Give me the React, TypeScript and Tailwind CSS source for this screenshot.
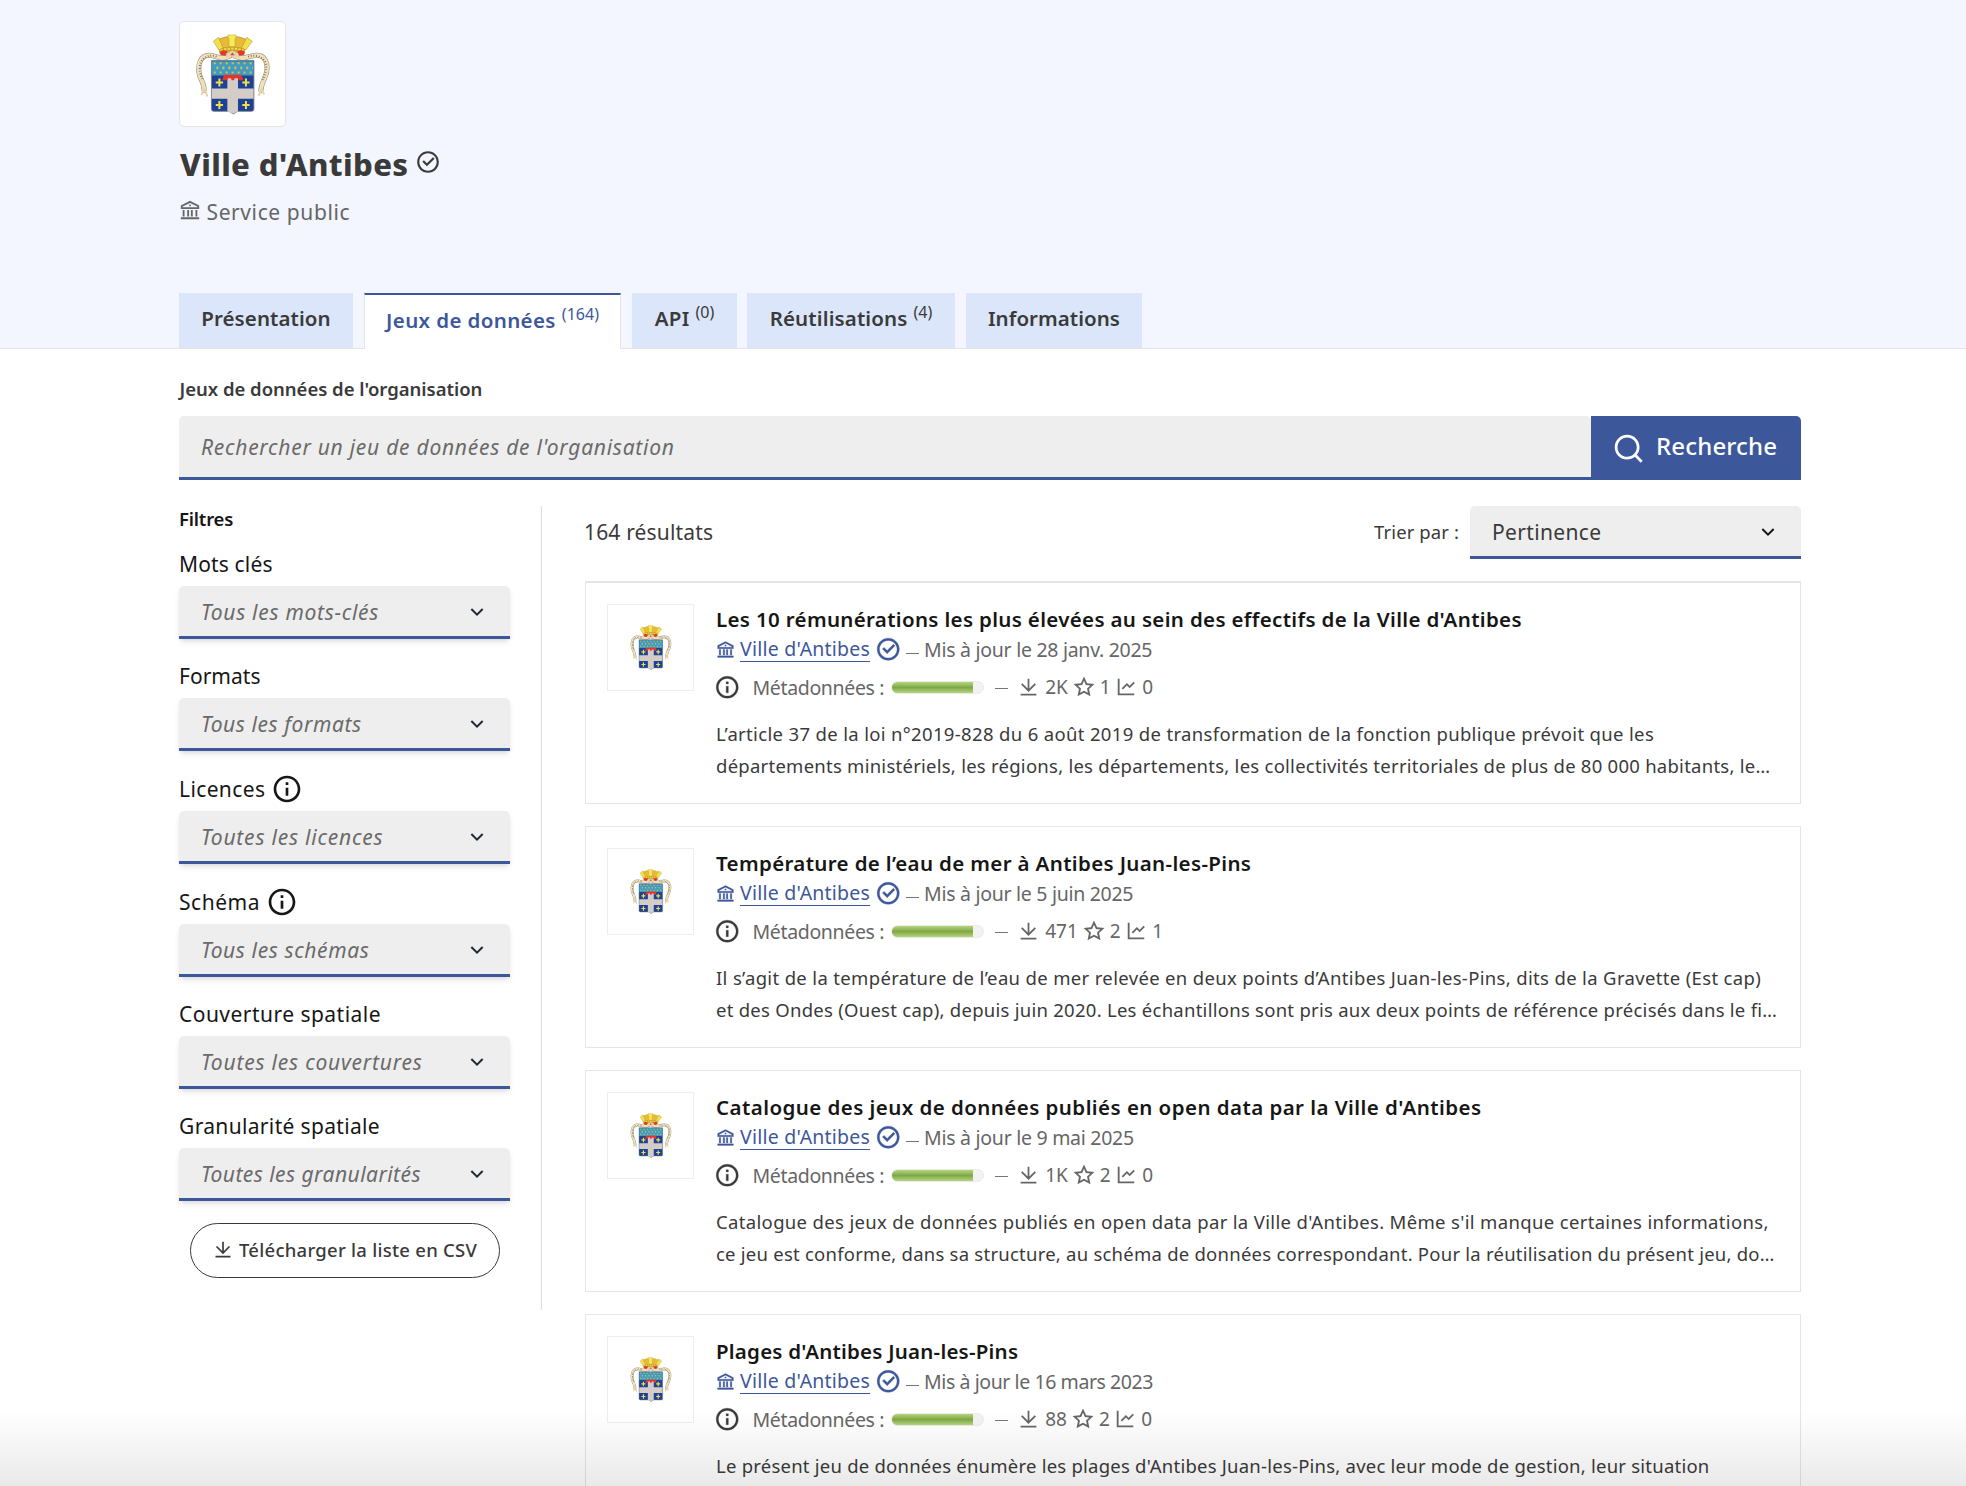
import React from "react";
import {
  RiArrowDownSLine,
  RiBankLine,
  RiCheckboxCircleLine,
  RiDownloadLine,
  RiInformationLine,
  RiLineChartLine,
  RiSearchLine,
  RiStarLine,
} from "react-icons/ri";

const LILIES = [
  [149, 216],
  [229, 216],
  [149, 284],
  [229, 284],
];

function CoatOfArms({ className }: { className: string }) {
  return (
    <svg viewBox="80 70 220 244" className={className} aria-hidden="true">
      <g fill="none" strokeLinecap="round" strokeLinejoin="round">
        <path d="M180 137C150 150 140 134 118 134C92 134 84 160 88 188C90 205 104 218 103 240" stroke="#7f8b91" strokeWidth="15" />
        <path d="M196 137C226 150 238 134 262 134C286 134 295 156 292 180C290 200 276 214 274 240" stroke="#7f8b91" strokeWidth="15" />
        <path d="M180 137C150 150 140 134 118 134C92 134 84 160 88 188C90 205 104 218 103 240" stroke="#f3dfb4" strokeWidth="12" />
        <path d="M196 137C226 150 238 134 262 134C286 134 295 156 292 180C290 200 276 214 274 240" stroke="#f3dfb4" strokeWidth="12" />
        <path d="M102 235L96 251M106 238L112 256M276 235L268 254M276 238L283 250" stroke="#e9d3a6" strokeWidth="6" />
        <path d="M140 138C120 130 92 140 90 170C89 190 94 196 98 206" stroke="#5a5040" strokeWidth="6" strokeDasharray="2 6" strokeLinecap="butt" />
        <path d="M236 138C258 130 288 140 290 166C290 186 284 196 280 208" stroke="#5a5040" strokeWidth="6" strokeDasharray="2 6" strokeLinecap="butt" />
      </g>
      <path d="M146 86Q188 68 230 86L224 128Q187 118 150 128Z" fill="#e9b93b" stroke="#a98a24" strokeWidth="2" />
      <path d="M148 114Q187 102 226 114L220 132Q187 122 154 132Z" fill="#c9a02c" />
      <path d="M152 120Q187 108 222 120" fill="none" stroke="#efe04a" strokeWidth="6" strokeDasharray="7 4" />
      <path d="M131 92L146 80L160 112L147 118Z" fill="#f2e04a" stroke="#a98a24" strokeWidth="1.5" />
      <path d="M248 92L232 80L216 112L229 118Z" fill="#f2e04a" stroke="#a98a24" strokeWidth="1.5" />
      <path d="M175 73H199V84H196V108H178V84H175Z" fill="#f7ea55" stroke="#b79d2c" strokeWidth="1.5" />
      <ellipse cx="162" cy="127" rx="11" ry="8" fill="#e03a26" />
      <ellipse cx="214" cy="127" rx="11" ry="8" fill="#e03a26" />
      <path d="M170 128L188 120L206 128L210 142Q188 132 168 142Z" fill="#e9cfae" />
      <path d="M182 134L188 126L195 134Z" fill="#d8452f" />
      <path d="M125 150H253V296Q253 303 246 303H204L191 311L178 303H132Q125 303 125 296Z" fill="#1d4195" stroke="#777d86" strokeWidth="2.5" />
      <rect x="126" y="152" width="126" height="43" fill="#3f9bc6" />
      <g stroke="#d3c23a" strokeWidth="6" strokeDasharray="6 12">
        <path d="M132 158H250" />
        <path d="M140 172H250" strokeWidth="8" />
        <path d="M132 186H250" />
      </g>
      <path d="M173 195H205V234H252V265H205V303L191 310L173 303V265H126V234H173Z" fill="#d3ccc7" />
      <path d="M163 193H216L221 209H207L205 203H195L193 209H186L184 203H175L172 209H158Z" fill="#e5342a" />
      {LILIES.map(([x, y]) => (
        <path key={`${x}-${y}`} d={`M${x} ${y - 12}V${y + 12}M${x - 11} ${y}H${x + 11}`} stroke="#f2e04a" strokeWidth="6" />
      ))}
    </svg>
  );
}

function Tab({ label, count, width, tracking, active }: { label: string; count?: number; width: string; tracking: string; active?: boolean }) {
  const look = active
    ? "-mb-px h-14 border-x border-t-2 border-x-[#e5e5e5] border-t-[#3d579b] bg-white pt-[11px] text-[#3d579b]"
    : "h-[55px] bg-[#dce6fa] pt-[10.5px] text-[#3a3a3a]";
  return (
    <a className={`block text-center text-[20.5px] leading-7 font-semibold whitespace-nowrap ${width} ${look}`}>
      <span className={tracking}>{label}</span>
      {count !== undefined && (
        <span className="ml-[6px] align-[8px] text-[16px] leading-[0] font-normal">({count})</span>
      )}
    </a>
  );
}

const FILTERS = [
  { label: "Mots clés", value: "Tous les mots-clés", lt: "tracking-[0.15px]", vt: "tracking-[0.71px]" },
  { label: "Formats", value: "Tous les formats", lt: "tracking-[0.03px]", vt: "tracking-[0.59px]" },
  { label: "Licences", value: "Toutes les licences", info: true, lt: "tracking-[0.38px]", vt: "tracking-[0.78px]" },
  { label: "Schéma", value: "Tous les schémas", info: true, lt: "tracking-[0.53px]", vt: "tracking-[0.61px]" },
  { label: "Couverture spatiale", value: "Toutes les couvertures", lt: "tracking-[0.47px]", vt: "tracking-[0.79px]" },
  { label: "Granularité spatiale", value: "Toutes les granularités", lt: "tracking-[0.34px]", vt: "tracking-[0.46px]" },
];

function Filter({ label, value, info, lt, vt }: { label: string; value: string; info?: boolean; lt: string; vt: string }) {
  return (
    <div className="mb-[23px]">
      <div className={`flex items-center text-[21px] text-[#161616] ${info ? "h-[29px]" : "h-7"}`}>
        <span className={`pt-[2px] ${lt}`}>{label}</span>
        {info && <RiInformationLine className="-my-1 ml-[6px] size-8" />}
      </div>
      <div className="mt-2 flex h-[53px] items-center justify-between rounded-t-[5px] border-b-[3px] border-[#3d579b] bg-[#eeeeee] pt-[2px] pr-[21px] pl-[22px] shadow-md">
        <span className={`pt-px text-[21px] text-[#6a6a6a] italic ${vt}`}>{value}</span>
        <RiArrowDownSLine className="size-6 text-[#1f2937]" />
      </div>
    </div>
  );
}

type Dataset = {
  title: string;
  tt: string;
  date: string;
  dt: string;
  downloads: string;
  stars: number;
  reuses: number;
  lines: { text: string; t: string }[];
};

const DATASETS: Dataset[] = [
  {
    title: "Les 10 rémunérations les plus élevées au sein des effectifs de la Ville d'Antibes",
    tt: "tracking-[0.333px]",
    date: "28 janv. 2025",
    dt: "tracking-[-0.28px]",
    downloads: "2K",
    stars: 1,
    reuses: 0,
    lines: [
      { text: "L’article 37 de la loi n°2019-828 du 6 août 2019 de transformation de la fonction publique prévoit que les", t: "tracking-[0.342px]" },
      { text: "départements ministériels, les régions, les départements, les collectivités territoriales de plus de 80 000 habitants, le…", t: "tracking-[0.252px]" },
    ],
  },
  {
    title: "Température de l’eau de mer à Antibes Juan-les-Pins",
    tt: "tracking-[0.352px]",
    date: "5 juin 2025",
    dt: "tracking-[-0.288px]",
    downloads: "471",
    stars: 2,
    reuses: 1,
    lines: [
      { text: "Il s’agit de la température de l’eau de mer relevée en deux points d’Antibes Juan-les-Pins, dits de la Gravette (Est cap)", t: "tracking-[0.342px]" },
      { text: "et des Ondes (Ouest cap), depuis juin 2020. Les échantillons sont pris aux deux points de référence précisés dans le fi…", t: "tracking-[0.264px]" },
    ],
  },
  {
    title: "Catalogue des jeux de données publiés en open data par la Ville d'Antibes",
    tt: "tracking-[0.444px]",
    date: "9 mai 2025",
    dt: "tracking-[-0.276px]",
    downloads: "1K",
    stars: 2,
    reuses: 0,
    lines: [
      { text: "Catalogue des jeux de données publiés en open data par la Ville d'Antibes. Même s'il manque certaines informations,", t: "tracking-[0.34px]" },
      { text: "ce jeu est conforme, dans sa structure, au schéma de données correspondant. Pour la réutilisation du présent jeu, do…", t: "tracking-[0.238px]" },
    ],
  },
  {
    title: "Plages d'Antibes Juan-les-Pins",
    tt: "tracking-[0.223px]",
    date: "16 mars 2023",
    dt: "tracking-[-0.42px]",
    downloads: "88",
    stars: 2,
    reuses: 0,
    lines: [
      { text: "Le présent jeu de données énumère les plages d'Antibes Juan-les-Pins, avec leur mode de gestion, leur situation", t: "tracking-[0.23px]" },
    ],
  },
];

function DatasetCard({ d }: { d: Dataset }) {
  return (
    <article className="flex h-[222px] shrink-0 gap-[22px] border border-[#e5e5e5] pt-[21px] pl-[21px]">
      <div className="flex h-[87px] w-[87px] shrink-0 items-center justify-center border border-[#eeeeee] bg-white">
        <CoatOfArms className="h-[45px] w-[42px]" />
      </div>
      <div className="min-w-0 flex-1 pt-px whitespace-nowrap">
        <h3 className={`text-[20.5px] leading-7 font-semibold text-[#161616] ${d.tt}`}>{d.title}</h3>
        <div className="mt-[3px] flex h-[26px] items-center text-[19.5px] text-[#666666]">
          <RiBankLine className="size-[19px] text-[#3d579b]" strokeWidth={0.3} />
          <a className="mt-px ml-[5px] border-b-[1.5px] border-[#3d579b] leading-[24px] tracking-[0.22px] text-[#3d579b]">Ville d'Antibes</a>
          <RiCheckboxCircleLine className="ml-[5px] size-[26.5px] text-[#3d579b]" strokeWidth={0.35} />
          <span className="mt-2 ml-[4px] h-px w-[13px] bg-[#777777]" />
          <span className={`mt-px ml-[5.5px] ${d.dt}`}>Mis à jour le {d.date}</span>
        </div>
        <div className="mt-3 flex h-[26px] items-center text-[19.5px] text-[#666666]">
          <RiInformationLine className="-ml-[2px] size-[26.5px] text-[#3a3a3a]" strokeWidth={0.25} />
          <span className="mt-px ml-[12px] tracking-[-0.35px]">Métadonnées :</span>
          <span className="mt-px ml-[7px] flex h-[13px] w-[93px] overflow-hidden rounded-full border border-[#ebebeb] bg-[#f2f2f2]">
            <span className="h-full w-[81px] bg-linear-to-b from-[#b5d67f] via-[#7fa844] to-[#b5d67f]" />
          </span>
          <span className="mt-[3px] ml-[11px] h-px w-[13px] bg-[#777777]" />
          <RiDownloadLine className="ml-[10px] size-[21px]" />
          <span className="mt-px ml-[6px] text-[19px]">{d.downloads}</span>
          <RiStarLine className="ml-[5px] size-[22px]" />
          <span className="mt-px ml-[5px] text-[19px]">{d.stars}</span>
          <RiLineChartLine className="ml-[4.5px] size-[22px]" />
          <span className="mt-px ml-[5px] text-[19px]">{d.reuses}</span>
        </div>
        <div className="mt-[18px] text-[18.5px] leading-8 text-[#3a3a3a]">
          {d.lines.map((line) => (
            <p key={line.text} className={line.t}>{line.text}</p>
          ))}
        </div>
      </div>
    </article>
  );
}

export default function App() {
  return (
    <div className="relative h-[1486px] overflow-hidden bg-white font-['Noto_Sans',sans-serif]">
      <header className="h-[349px] border-b border-[#e5e5e5] bg-[#f3f6fe]">
        <div className="ml-[179px] w-[1622px] pt-[21px]">
          <div className="flex h-[106px] w-[107px] items-center justify-center rounded-[5px] border border-[#e5e5e5] bg-white">
            <CoatOfArms className="h-[81px] w-[74px]" />
          </div>
          <div className="mt-[17px] flex h-10 items-center text-[#3a3a3a]">
            <h1 className="pl-px text-[31px] leading-10 font-extrabold tracking-[0.38px]">Ville d'Antibes</h1>
            <RiCheckboxCircleLine className="mb-[4px] ml-[6px] size-[26px]" />
          </div>
          <div className="mt-[14px] flex h-7 items-center text-[#666666]">
            <RiBankLine className="mb-[4px] size-[22px]" />
            <span className="mt-[2px] ml-[5.5px] text-[21px] tracking-[0.6px]">Service public</span>
          </div>
          <nav className="mt-[67px] flex items-start">
            <Tab label="Présentation" width="w-[174px]" tracking="tracking-[0.08px]" />
            <div className="w-[11px]" />
            <Tab label="Jeux de données" count={164} active width="w-[257px]" tracking="tracking-[0.38px]" />
            <div className="w-[11px]" />
            <Tab label="API" count={0} width="w-[105px]" tracking="tracking-[0.3px]" />
            <div className="w-[10px]" />
            <Tab label="Réutilisations" count={4} width="w-[208px]" tracking="tracking-[0.13px]" />
            <div className="w-[11px]" />
            <Tab label="Informations" width="w-[176px]" tracking="tracking-[0.05px]" />
          </nav>
        </div>
      </header>

      <main className="ml-[179px] w-[1622px] pt-[27px]">
        <h2 className="pl-[0.5px] text-[18.5px] leading-[26px] font-semibold tracking-[-0.02px] text-[#3a3a3a]">Jeux de données de l'organisation</h2>
        <form className="mt-[14px] flex h-16">
          <div className="flex w-[1412px] items-center rounded-t-[5px] border-b-[3px] border-[#3d579b] bg-[#eeeeee] pt-[2px] pl-[22px] text-[21px] tracking-[0.74px] text-[#6a6a6a] italic">
            Rechercher un jeu de données de l'organisation
          </div>
          <button type="button" className="flex flex-1 items-center rounded-tr-[5px] bg-[#3d579b] pl-[21px] text-white">
            <RiSearchLine className="size-[33px]" />
            <span className="mb-[4px] ml-[11px] text-[24px] font-medium tracking-[0.15px]">Recherche</span>
          </button>
        </form>

        <div className="mt-[26px] flex items-start">
          <aside className="h-[804px] w-[363px] shrink-0 border-r border-[#dddddd] pr-[31px]">
            <h3 className="mb-[18px] text-[18.5px] leading-[26px] font-semibold tracking-[-0.2px] text-[#161616]">Filtres</h3>
            {FILTERS.map((f) => (
              <Filter key={f.label} {...f} />
            ))}
            <button type="button" className="-mt-px ml-[11px] flex h-[55px] w-[310px] items-center rounded-full border border-[#3a3a3a] pl-[22px] text-[18.5px] font-medium whitespace-nowrap text-[#3a3a3a]">
              <RiDownloadLine className="mb-px size-[20px]" />
              <span className="mb-px ml-[6px] tracking-[0.26px]">Télécharger la liste en CSV</span>
            </button>
          </aside>

          <section className="ml-[43px] flex-1">
            <div className="flex h-[53px] items-center">
              <span className="-ml-px text-[21px] tracking-[0.16px] text-[#3a3a3a]">164 résultats</span>
              <span className="mb-px ml-auto text-[18.5px] tracking-[0.1px] text-[#3a3a3a]">Trier par :</span>
              <div className="ml-[11px] flex h-full w-[331px] items-center justify-between rounded-t-[5px] border-b-[3px] border-[#3d579b] bg-[#eeeeee] pt-[2px] pr-[21px] pl-[22px]">
                <span className="pt-px text-[21px] tracking-[0.34px] text-[#3a3a3a]">Pertinence</span>
                <RiArrowDownSLine className="size-6 text-[#161616]" />
              </div>
            </div>
            <div className="mt-[22px] flex flex-col gap-[22px] border-t border-[#e5e5e5]">
              {DATASETS.map((d) => (
                <DatasetCard key={d.title} d={d} />
              ))}
            </div>
          </section>
        </div>
      </main>

      <div className="pointer-events-none absolute inset-x-0 bottom-0 h-[75px] bg-linear-to-b from-transparent to-black/[0.085]" />
    </div>
  );
}
